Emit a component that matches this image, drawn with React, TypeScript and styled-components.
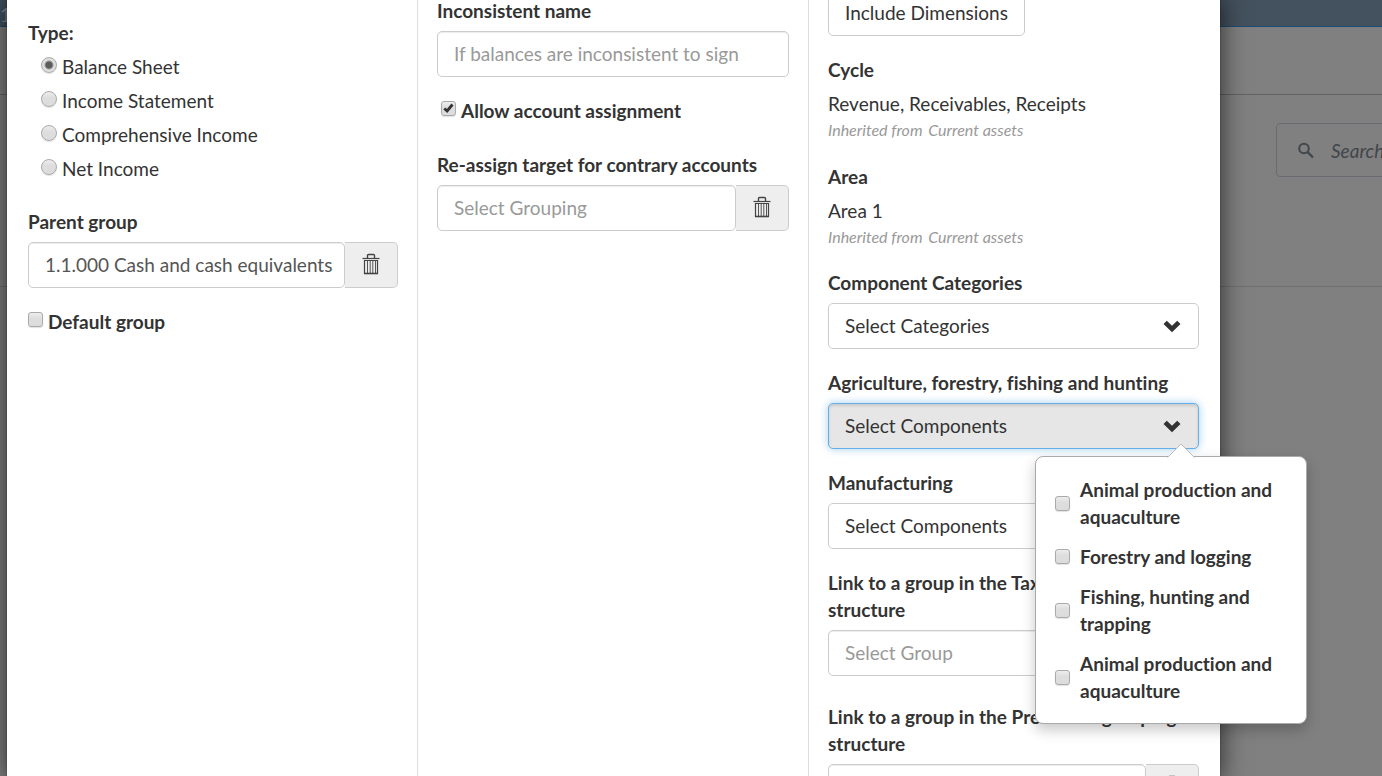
import React from "react";
import styled, { createGlobalStyle, css } from "styled-components";

const GlobalStyle = createGlobalStyle`
  * { box-sizing: border-box; }
  html, body { height: 100%; }
  body {
    margin: 0;
    overflow: hidden;
    background: #808080;
    color: #333;
    font-family: Lato, "Open Sans", sans-serif;
    font-size: 19px;
    line-height: 27px;
    font-variant-ligatures: no-common-ligatures;
  }
  #root { height: 100%; }
  input, button { font: inherit; color: inherit; margin: 0; }
`;

const Screen = styled.div`
  position: relative;
  height: 100%;
  overflow: hidden;
`;

const Backdrop = styled.div`
  display: flex;
  flex-direction: column;
`;

const TopBar = styled.header`
  height: 27px;
  padding-top: 3px;
  background: #44525f;
  border-bottom: 1px solid #1f4a72;
  color: #7d8b98;
  line-height: 24px;
`;

const SubBar = styled.div`
  height: 68px;
  border-bottom: 1px solid #636363;
`;

const SearchArea = styled.div`
  display: flex;
  justify-content: flex-end;
  height: 192px;
  padding-top: 28px;
  border-bottom: 1px solid #707070;
`;

const SearchBox = styled.label`
  display: flex;
  align-items: center;
  gap: 16px;
  flex: 0 0 280px;
  height: 54px;
  margin-right: -174px;
  padding: 0 20px;
  border: 1px solid #686c70;
  border-radius: 4px;
  color: #41464b;
`;

const SearchInput = styled.input`
  width: 160px;
  padding: 0;
  border: 0;
  background: none;
  font-style: italic;
  &::placeholder { color: #41464b; opacity: 1; }
`;

const Modal = styled.main`
  position: absolute;
  top: -10px;
  bottom: 0;
  left: 7px;
  right: 162px;
  display: grid;
  grid-template-columns: 411fr 391fr 411fr;
  background: #fff;
  box-shadow: 0 5px 25px rgba(0, 0, 0, 0.7), 0 0 1px rgba(0, 0, 0, 0.6);
`;

const Column = styled.section<{ $divided?: boolean; $top?: number }>`
  min-width: 0;
  padding: ${(p) => p.$top || 0}px 19px 0;
  ${(p) => p.$divided && css`border-right: 1px solid #ddd;`}
`;

const FirstColumn = styled(Column)`
  padding-left: 21px;
`;

const LastColumn = styled(Column)`
  padding-right: 21px;
`;

const Field = styled.div<{ $gap?: number }>`
  position: relative;
  margin-bottom: ${(p) => p.$gap ?? 20}px;
`;

const Label = styled.label`
  display: block;
  margin-bottom: 7px;
  font-weight: 700;
`;

const Heading = styled.div`
  margin-bottom: 7px;
  font-weight: 700;
`;

const RadioGroup = styled.fieldset`
  display: flex;
  flex-direction: column;
  gap: 7px;
  margin: 0 0 26px;
  padding: 0 0 0 13px;
  border: 0;
`;

const Legend = styled.legend`
  margin: 0 0 7px -13px;
  padding: 0;
  font-weight: 700;
`;

const Choice = styled.label<{ $bold?: boolean }>`
  display: flex;
  align-items: flex-start;
  gap: 5px;
  font-weight: ${(p) => (p.$bold ? 700 : 400)};
`;

const controlFace = css`
  appearance: none;
  flex: none;
  border: 1px solid #aaa;
  background: linear-gradient(#ededed, #dedede 40%, #dcdcdc);
  box-shadow: 0 1px 1px rgba(0, 0, 0, 0.12);
`;

const Radio = styled.input.attrs({ type: "radio" })`
  ${controlFace}
  width: 16px;
  height: 16px;
  margin-top: 4px;
  border-radius: 50%;
  &:checked {
    background: radial-gradient(circle, #5c5c5c 0 3px, #dedede 5px);
  }
`;

const Checkbox = styled.input.attrs({ type: "checkbox" })`
  ${controlFace}
  width: 15px;
  height: 15px;
  border-radius: 3px;
`;

const CheckBoxWrap = styled.span`
  position: relative;
  display: flex;
  flex: none;
  margin-top: 4px;
  svg { position: absolute; inset: 0; pointer-events: none; }
`;

const CheckRow = styled(Choice)<{ $inset?: boolean }>`
  padding-left: ${(p) => (p.$inset ? 4 : 0)}px;
`;

const InputGroup = styled.div`
  display: flex;
  height: 46px;
`;

const TextInput = styled.input`
  display: block;
  flex: 1;
  width: 100%;
  min-width: 0;
  height: 46px;
  padding: 0 8px 2px 16px;
  border: 1px solid #ccc;
  border-radius: 5px;
  background: #fff;
  box-shadow: inset 0 1px 1px rgba(0, 0, 0, 0.075);
  color: #555;
  &::placeholder { color: #999; opacity: 1; }
`;

const TrashButton = styled.button`
  display: flex;
  align-items: center;
  justify-content: center;
  width: 53px;
  padding: 0 0 2px;
  border: 1px solid #ccc;
  border-left: 0;
  border-radius: 0 5px 5px 0;
  background: #eee;
  color: #444;
`;

const PlainButton = styled.button`
  display: block;
  height: 46px;
  padding: 0 16px 2px;
  border: 1px solid #ccc;
  border-radius: 5px;
  background: #fff;
`;

const DropButton = styled(PlainButton)<{ $open?: boolean }>`
  display: flex;
  align-items: center;
  justify-content: space-between;
  width: 100%;
  padding: 0 17px 2px 16px;
  ${(p) => p.$open && css`
    background: #e6e6e6;
    border-color: #66afe9;
    box-shadow: inset 0 2px 3px rgba(0, 0, 0, 0.12), 0 0 8px rgba(102, 175, 233, 0.6);
  `}
`;

const Value = styled.div``;

const Inherited = styled.div`
  color: #999;
  font-size: 16px;
  font-style: italic;
  line-height: 26px;
  span { margin-left: 2px; }
`;

const Popover = styled.div`
  position: absolute;
  z-index: 2;
  top: 87px;
  right: -108px;
  width: 272px;
  padding: 19px;
  display: flex;
  flex-direction: column;
  gap: 13px;
  border: 1px solid #aaa;
  border-radius: 8px;
  background: #fff;
  box-shadow: 0 6px 14px rgba(0, 0, 0, 0.22);
`;

const Arrow = styled.svg`
  position: absolute;
  top: -14px;
  right: 111px;
`;

const Option = styled.label`
  display: flex;
  align-items: center;
  gap: 10px;
  font-weight: 700;
`;

const TrashIcon = () => (
  <svg width="18" height="22" viewBox="0 0 18 22" fill="none" stroke="currentColor" aria-hidden="true">
    <path d="M0.5 5.5h17" strokeWidth="1.2" />
    <path d="M5.5 5V2.5q0-1 1-1h5q1 0 1 1V5" strokeWidth="1.4" />
    <path d="M2.5 7.5h13v13h-13z" strokeWidth="1.2" />
    <path d="M5.5 8v12M8.2 8v12M10.8 8v12M13.5 8v12" strokeWidth="0.9" />
    <path d="M2 20.5h14" strokeWidth="1.6" />
  </svg>
);

const Chevron = () => (
  <svg width="18" height="15" viewBox="0 -2 18 15" fill="#333" aria-hidden="true">
    <path d="M0.5 4 3.8 0.7 9 5.8 14.2 0.7 17.5 4 9 12.3z" />
  </svg>
);

const Check = () => (
  <svg width="15" height="15" viewBox="0 0 15 15" fill="none" stroke="#333" strokeWidth="2.8" aria-hidden="true">
    <path d="M3.3 7.5 6.1 10 11.5 3.5" />
  </svg>
);

const SearchIcon = () => (
  <svg width="18" height="18" viewBox="0 0 18 18" fill="none" stroke="currentColor" strokeWidth="2" aria-hidden="true">
    <circle cx="7" cy="7.5" r="4.8" />
    <path d="m10.5 11 5.5 5.5" strokeWidth="2.3" />
  </svg>
);

const types = ["Balance Sheet", "Income Statement", "Comprehensive Income", "Net Income"];
const components = [
  "Animal production and aquaculture",
  "Forestry and logging",
  "Fishing, hunting and trapping",
  "Animal production and aquaculture",
];

function GroupPicker({ id, label, value, placeholder, gap }: {
  id: string; label: string; value?: string; placeholder?: string; gap?: number;
}) {
  return (
    <Field $gap={gap}>
      <Label htmlFor={id}>{label}</Label>
      <InputGroup>
        <TextInput id={id} defaultValue={value} placeholder={placeholder} />
        <TrashButton type="button" aria-label="Clear"><TrashIcon /></TrashButton>
      </InputGroup>
    </Field>
  );
}

function DropField({ id, label, text, open, children }: {
  id: string; label: string; text: string; open?: boolean; children?: React.ReactNode;
}) {
  return (
    <Field>
      <Label htmlFor={id}>{label}</Label>
      <DropButton id={id} type="button" $open={open} aria-expanded={!!open}>
        {text}
        <Chevron />
      </DropButton>
      {children}
    </Field>
  );
}

function CheckField({ label, checked, inset }: { label: string; checked?: boolean; inset?: boolean }) {
  return (
    <CheckRow $bold $inset={inset}>
      <CheckBoxWrap>
        <Checkbox defaultChecked={checked} />
        {checked && <Check />}
      </CheckBoxWrap>
      {label}
    </CheckRow>
  );
}

function InheritedField({ title, value, gap }: { title: string; value: string; gap?: number }) {
  return (
    <Field $gap={gap}>
      <Heading>{title}</Heading>
      <Value>{value}</Value>
      <Inherited>Inherited from <span>Current assets</span></Inherited>
    </Field>
  );
}

export default function App() {
  return (
    <Screen>
      <GlobalStyle />
      <Backdrop>
        <TopBar>19</TopBar>
        <SubBar />
        <SearchArea>
          <SearchBox>
            <SearchIcon />
            <SearchInput placeholder="Search" aria-label="Search" />
          </SearchBox>
        </SearchArea>
      </Backdrop>
      <Modal>
        <FirstColumn $divided $top={29}>
          <RadioGroup>
            <Legend>Type:</Legend>
            {types.map((t, i) => (
              <Choice key={t}>
                <Radio name="type" defaultChecked={i === 0} />
                {t}
              </Choice>
            ))}
          </RadioGroup>
          <GroupPicker id="parent" label="Parent group" value="1.1.000 Cash and cash equivalents" />
          <CheckField label="Default group" />
        </FirstColumn>
        <Column $divided $top={7}>
          <Field>
            <Label htmlFor="inconsistent">Inconsistent name</Label>
            <TextInput id="inconsistent" placeholder="If balances are inconsistent to sign" />
          </Field>
          <Field $gap={27}>
            <CheckField label="Allow account assignment" checked inset />
          </Field>
          <GroupPicker id="target" label="Re-assign target for contrary accounts" placeholder="Select Grouping" />
        </Column>
        <LastColumn>
          <Field>
            <PlainButton type="button">Include Dimensions</PlainButton>
          </Field>
          <InheritedField title="Cycle" value="Revenue, Receivables, Receipts" />
          <InheritedField title="Area" value="Area 1" gap={19} />
          <DropField id="categories" label="Component Categories" text="Select Categories" />
          <DropField id="agriculture" label="Agriculture, forestry, fishing and hunting" text="Select Components" open>
            <Popover>
              <Arrow width="28" height="15" viewBox="0 0 28 15" aria-hidden="true">
                <path d="M0 15 14 1 28 15z" fill="#fff" />
                <path d="M0.5 14.5 14 1 27.5 14.5" fill="none" stroke="#bbb" />
              </Arrow>
              {components.map((c, i) => (
                <Option key={i}><Checkbox />{c}</Option>
              ))}
            </Popover>
          </DropField>
          <DropField id="manufacturing" label="Manufacturing" text="Select Components" />
          <GroupPicker id="tax" label="Link to a group in the Tax return grouping structure" placeholder="Select Group" gap={27} />
          <GroupPicker id="presentation" label="Link to a group in the Presented grouping structure" />
        </LastColumn>
      </Modal>
    </Screen>
  );
}
